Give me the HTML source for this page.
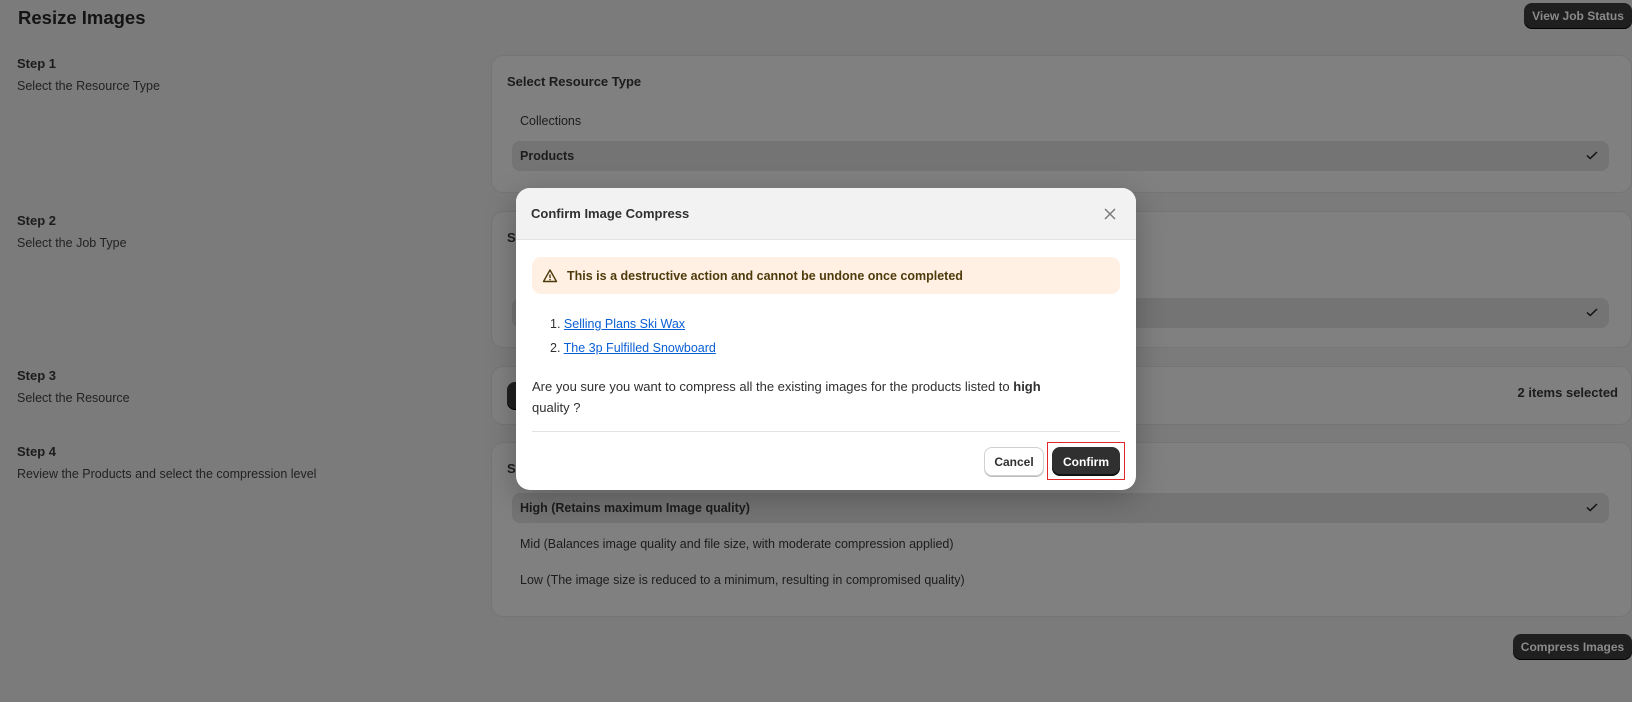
<!DOCTYPE html>
<html><head><meta charset="utf-8"><style>
*{box-sizing:border-box;margin:0;padding:0}
body{width:1632px;height:702px;overflow:hidden;background:#7b7b7b;font-family:"Liberation Sans",sans-serif;font-size:12.5px;color:#1c1c1c;position:relative}
.a{position:absolute}
.h1{left:18px;top:7px;font-size:18.5px;font-weight:bold;color:#141414}
.btn{background:#1f1f1f;color:#8a8a8a;border-radius:8px;font-weight:bold;font-size:12px;display:flex;align-items:center;justify-content:center;box-shadow:inset 0 -1px 0 #000}
.step{left:17px;font-weight:bold;font-size:13px}
.desc{left:17px;font-size:12.5px;color:#222}
.card{left:491px;width:1141px;background:#808080;border-radius:12px;border:1px solid #757575}
.row{position:absolute;left:20px;right:22px;height:30px;border-radius:8px;padding-left:8px;display:flex;align-items:center}
.sel{background:#747474;font-weight:bold}
.chk{position:absolute;right:10px;top:7px}
.t{position:absolute;left:15px;font-weight:bold;font-size:13px}
.modal{left:516px;top:188px;width:620px;height:302px;background:#fff;border-radius:14px;overflow:hidden;box-shadow:0 8px 30px rgba(0,0,0,.25)}
.mh{height:52px;background:#f2f2f2;border-bottom:1px solid #e3e3e3;position:relative}
a{color:#0a5fd6;text-decoration:underline}
</style></head><body>
<div class="a h1">Resize Images</div>
<div class="a btn" style="left:1524px;top:3px;width:108px;height:26px">View Job Status</div>

<div class="a step" style="top:56px">Step 1</div>
<div class="a desc" style="top:79px">Select the Resource Type</div>
<div class="a step" style="top:213px">Step 2</div>
<div class="a desc" style="top:236px">Select the Job Type</div>
<div class="a step" style="top:368px">Step 3</div>
<div class="a desc" style="top:391px">Select the Resource</div>
<div class="a step" style="top:444px">Step 4</div>
<div class="a desc" style="top:467px">Review the Products and select the compression level</div>

<div class="a card" style="top:55px;height:138px">
 <div class="t" style="top:18px">Select Resource Type</div>
 <div class="row" style="top:50px">Collections</div>
 <div class="row sel" style="top:85px">Products<svg class="chk" width="14" height="14" viewBox="0 0 14 14"><path d="M2 7.5l3.2 3L12 4" fill="none" stroke="#111" stroke-width="1.5"/></svg></div>
</div>
<div class="a card" style="top:211px;height:137px">
 <div class="t" style="top:18px">Select Job Type</div>
 <div class="row sel" style="top:86px"><svg class="chk" width="14" height="14" viewBox="0 0 14 14"><path d="M2 7.5l3.2 3L12 4" fill="none" stroke="#111" stroke-width="1.5"/></svg></div>
</div>
<div class="a card" style="top:366px;height:59px">
 <div class="a btn" style="left:15px;top:15px;width:80px;height:28px"></div>
 <div class="a" style="right:13px;top:18px;font-weight:bold;font-size:13px">2 items selected</div>
</div>
<div class="a card" style="top:442px;height:175px">
 <div class="t" style="top:18px">Select compression level</div>
 <div class="row sel" style="top:50px">High (Retains maximum Image quality)<svg class="chk" width="14" height="14" viewBox="0 0 14 14"><path d="M2 7.5l3.2 3L12 4" fill="none" stroke="#111" stroke-width="1.5"/></svg></div>
 <div class="row" style="top:86px">Mid (Balances image quality and file size, with moderate compression applied)</div>
 <div class="row" style="top:122px">Low (The image size is reduced to a minimum, resulting in compromised quality)</div>
</div>
<div class="a btn" style="left:1513px;top:634px;width:119px;height:26px">Compress Images</div>

<div class="a modal">
 <div class="mh">
  <div class="a" style="left:15px;top:18px;font-weight:bold;font-size:13px;color:#303030">Confirm Image Compress</div>
  <svg class="a" style="left:587px;top:19px" width="14" height="14" viewBox="0 0 14 14"><path d="M2 2l10 10M12 2L2 12" stroke="#777" stroke-width="1.4"/></svg>
 </div>
 <div class="a" style="left:16px;top:69px;width:588px;height:37px;background:#fff0e3;border-radius:9px;display:flex;align-items:center;padding-left:10px;font-weight:bold;color:#4f3a0b;font-size:12.5px">
  <svg width="16" height="16" viewBox="0 0 16 16" style="margin-right:9px"><path d="M8 2L14.5 13.5H1.5Z" fill="none" stroke="#4f3a0b" stroke-width="1.4" stroke-linejoin="round"/><path d="M8 6.5v3.5" stroke="#4f3a0b" stroke-width="1.4"/><circle cx="8" cy="11.6" r=".8" fill="#4f3a0b"/></svg>
  This is a destructive action and cannot be undone once completed</div>
 <div class="a" style="left:34px;top:124px;line-height:24px;color:#303030;font-size:12.5px">1. <a>Selling Plans Ski Wax</a><br>2. <a>The 3p Fulfilled Snowboard</a></div>
 <div class="a" style="left:16px;top:188px;width:540px;line-height:21px;color:#303030;font-size:13px">Are you sure you want to compress all the existing images for the products listed to <b>high</b><br>quality ?</div>
 <div class="a" style="left:16px;top:243px;width:588px;height:1px;background:#e3e3e3"></div>
 <div class="a" style="left:468px;top:259px;width:60px;height:29px;border:1px solid #d0d0d0;border-radius:8px;box-shadow:0 1px 0 #bbb;display:flex;align-items:center;justify-content:center;font-weight:bold;font-size:12px;color:#303030">Cancel</div>
 <div class="a" style="left:531px;top:254px;width:78px;height:38px;border:1.5px solid #e0282c"></div>
 <div class="a" style="left:536px;top:259px;width:68px;height:29px;background:#303030;border-radius:8px;display:flex;align-items:center;justify-content:center;font-weight:bold;font-size:12px;color:#fff;box-shadow:inset 0 -2px 0 #111">Confirm</div>
</div>
</body></html>
